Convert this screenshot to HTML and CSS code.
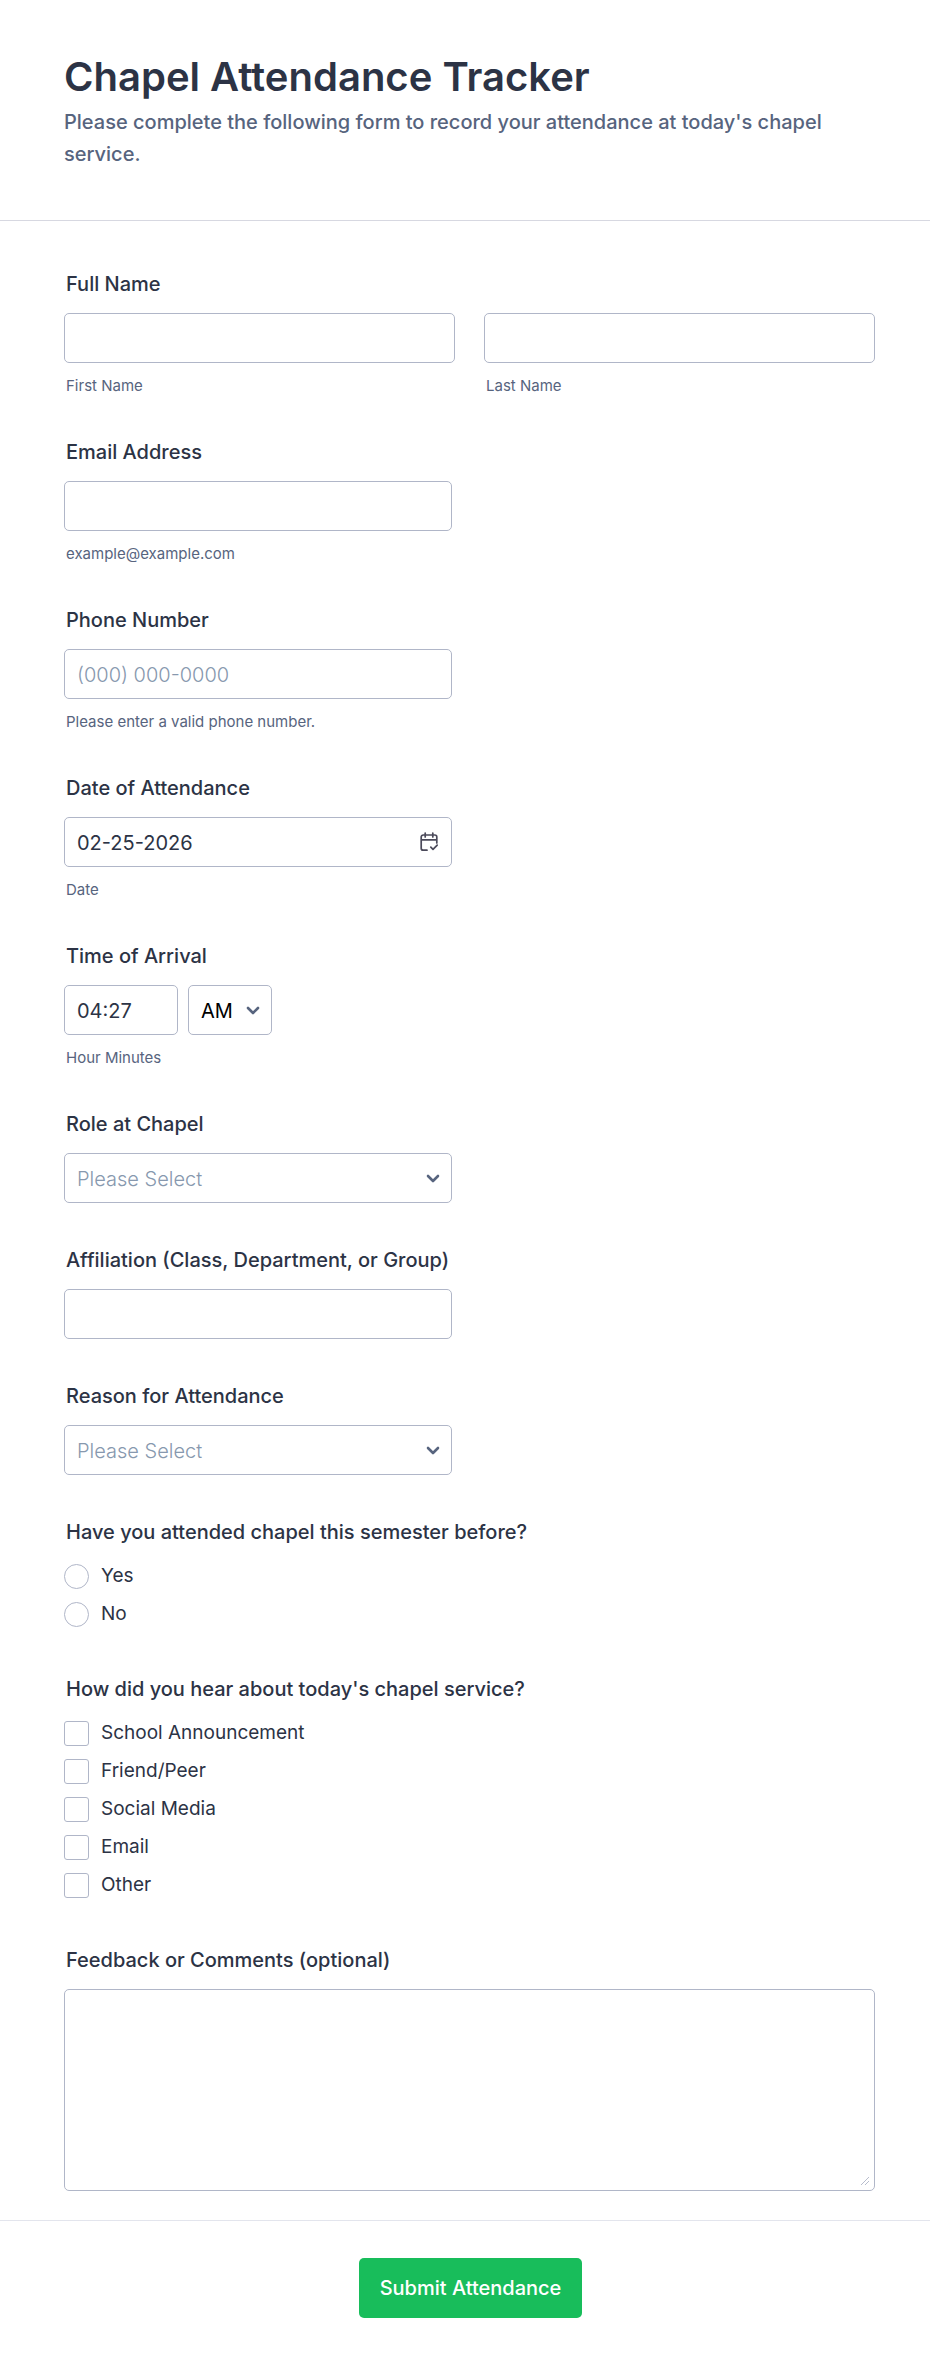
FILE: index.html
```html
<!DOCTYPE html>
<html lang="en">
<head>
    <meta charset="utf-8">
    <meta name="viewport" content="width=device-width, initial-scale=1">
    <title>Chapel Attendance Tracker</title>
    <link rel="stylesheet" href="styles.css">
</head>
<body>

<form class="form-page" action="#" method="POST">
    <header class="form-header">
        <h1>Chapel Attendance Tracker</h1>
        <p>Please complete the following form to record your attendance at today's chapel service.</p>
    </header>

    <div class="form-body">
        <fieldset class="field">
            <legend class="label">Full Name</legend>
            <div class="name-row">
                <div>
                    <input class="control" type="text" id="first-name" name="first-name">
                    <label class="sublabel" for="first-name">First Name</label>
                </div>
                <div>
                    <input class="control" type="text" id="last-name" name="last-name">
                    <label class="sublabel" for="last-name">Last Name</label>
                </div>
            </div>
        </fieldset>

        <div class="field half">
            <label class="label" for="email">Email Address</label>
            <input class="control" type="email" id="email" name="email">
            <span class="sublabel">example@example.com</span>
        </div>

        <div class="field half">
            <label class="label" for="phone">Phone Number</label>
            <input class="control" type="tel" id="phone" name="phone" placeholder="(000) 000-0000">
            <span class="sublabel">Please enter a valid phone number.</span>
        </div>

        <div class="field half">
            <label class="label" for="date">Date of Attendance</label>
            <div class="with-icon">
                <input class="control" type="text" id="date" name="date" value="02-25-2026">
                <svg class="icon-calendar" viewBox="0 0 20 20" width="20" height="20" aria-hidden="true">
                    <path d="M8 18.2H4.2a2 2 0 0 1-2-2V5a2 2 0 0 1 2-2h11.6a2 2 0 0 1 2 2v6M2.2 7.8h15.6M6.2 1v4M13.8 1v4M11.8 15.2l2.2 2.2 4.2-4.2"/>
                </svg>
            </div>
            <span class="sublabel">Date</span>
        </div>

        <div class="field half">
            <label class="label" for="time">Time of Arrival</label>
            <div class="time-row">
                <input class="control time" type="text" id="time" name="time" value="04:27">
                <div class="with-icon ampm">
                    <select class="control" name="ampm" aria-label="AM/PM">
                        <option>AM</option>
                        <option>PM</option>
                    </select>
                    <svg class="icon-arrow" viewBox="0 0 14 10" width="14" height="10" aria-hidden="true"><path d="M2 2l5 5 5-5"/></svg>
                </div>
            </div>
            <span class="sublabel">Hour Minutes</span>
        </div>

        <div class="field half">
            <label class="label" for="role">Role at Chapel</label>
            <div class="with-icon">
                <select class="control empty" id="role" name="role">
                    <option value="">Please Select</option>
                </select>
                <svg class="icon-arrow" viewBox="0 0 14 10" width="14" height="10" aria-hidden="true"><path d="M2 2l5 5 5-5"/></svg>
            </div>
        </div>

        <div class="field half">
            <label class="label" for="affiliation">Affiliation (Class, Department, or Group)</label>
            <input class="control" type="text" id="affiliation" name="affiliation">
        </div>

        <div class="field half">
            <label class="label" for="reason">Reason for Attendance</label>
            <div class="with-icon">
                <select class="control empty" id="reason" name="reason">
                    <option value="">Please Select</option>
                </select>
                <svg class="icon-arrow" viewBox="0 0 14 10" width="14" height="10" aria-hidden="true"><path d="M2 2l5 5 5-5"/></svg>
            </div>
        </div>

        <fieldset class="field">
            <legend class="label">Have you attended chapel this semester before?</legend>
            <div class="choices">
                <label class="choice"><input type="radio" name="attended" value="yes"> Yes</label>
                <label class="choice"><input type="radio" name="attended" value="no"> No</label>
            </div>
        </fieldset>

        <fieldset class="field">
            <legend class="label">How did you hear about today's chapel service?</legend>
            <div class="choices">
                <label class="choice"><input type="checkbox" name="source" value="school"> School Announcement</label>
                <label class="choice"><input type="checkbox" name="source" value="friend"> Friend/Peer</label>
                <label class="choice"><input type="checkbox" name="source" value="social"> Social Media</label>
                <label class="choice"><input type="checkbox" name="source" value="email"> Email</label>
                <label class="choice"><input type="checkbox" name="source" value="other"> Other</label>
            </div>
        </fieldset>

        <div class="field">
            <label class="label" for="feedback">Feedback or Comments (optional)</label>
            <textarea class="control" id="feedback" name="feedback"></textarea>
        </div>
    </div>

    <div class="form-footer">
        <button type="submit">Submit Attendance</button>
    </div>
</form>

</body>
</html>
```
FILE: styles.css
```css
* {
    box-sizing: border-box;
}

body {
    font-family: Inter, sans-serif;
    margin: 0;
    background-color: #fff;
    color: #2c3345;
}

.form-header {
    padding: 52px 64px 50px;
    border-bottom: 1px solid #d7d8e1;
}

.form-header h1 {
    margin: 0;
    font-size: 40px;
    font-weight: 600;
    line-height: 50px;
}

.form-header p {
    margin: 4px 0 0;
    font-size: 20px;
    font-weight: 500;
    line-height: 32px;
    color: #57647e;
    max-width: 800px;
}

.form-body {
    padding: 51px 55px 29px 64px;
}

.field {
    margin: 0 0 45px;
    padding: 0;
    border: 0;
    min-width: 0;
}

.field:last-child {
    margin-bottom: 0;
}

.half {
    max-width: 388px;
}

.label {
    display: block;
    padding: 0;
    margin: 0 0 17px 2px;
    font-size: 20px;
    font-weight: 500;
    line-height: 24px;
    white-space: nowrap;
}

.sublabel {
    display: block;
    margin: 14px 0 0 2px;
    font-size: 15px;
    line-height: 18px;
    color: #57647e;
}

.control {
    display: block;
    width: 100%;
    height: 50px;
    padding: 1px 12px 0;
    border: 1px solid #b0b6c8;
    border-radius: 5px;
    background-color: #fff;
    color: #2c3345;
    font-family: inherit;
    font-size: 20px;
    appearance: none;
}

.control::placeholder {
    color: #8798ae;
    font-weight: 300;
}

select.control {
    color: #000;
}

select.empty {
    color: #8798ae;
    font-weight: 300;
}

textarea.control {
    height: 202px;
    padding: 12px;
    resize: vertical;
}

textarea.control::-webkit-resizer {
    background: url("data:image/svg+xml,%3Csvg xmlns='http://www.w3.org/2000/svg' width='15' height='15'%3E%3Cpath d='M2 10l8-8M6 10l4-4' fill='none' stroke='%23b8bdcd'/%3E%3C/svg%3E") no-repeat;
}

.name-row {
    display: grid;
    grid-template-columns: 1fr 1fr;
    gap: 29px;
}

.time-row {
    display: flex;
    gap: 10px;
}

.time {
    width: 114px;
}

.ampm {
    width: 84px;
}

/* Icons drawn on top of the right end of a control */
.with-icon {
    position: relative;
}

.with-icon svg {
    position: absolute;
    fill: none;
    stroke-linecap: round;
    stroke-linejoin: round;
    pointer-events: none;
}

.icon-calendar {
    top: 15px;
    right: 13px;
    stroke: #4b4a5a;
    stroke-width: 1.7;
}

.icon-arrow {
    top: 21px;
    right: 12px;
    stroke: #57647e;
    stroke-width: 2.6;
}

.choices {
    display: flex;
    flex-direction: column;
    align-items: flex-start;
    gap: 12px;
    padding: 2px 0 5px;
}

.choice {
    display: flex;
    align-items: center;
    gap: 12px;
    font-size: 19px;
    line-height: 26px;
}

.choice input {
    appearance: none;
    width: 25px;
    height: 25px;
    margin: 0;
    border: 1px solid #b0b6c8;
    border-radius: 3px;
    background-color: #fff;
}

.choice input[type="radio"] {
    border-radius: 50%;
}

.choice input:checked {
    background-color: #18bd5b;
}

.form-footer {
    padding: 37px 55px 49px 66px;
    border-top: 1px solid #e3e5ed;
    text-align: center;
}

.form-footer button {
    height: 60px;
    padding: 0 21px;
    border: 0;
    border-radius: 5px;
    background-color: #18bd5b;
    color: #fff;
    font-family: inherit;
    font-size: 20px;
    font-weight: 500;
    cursor: pointer;
}
```
